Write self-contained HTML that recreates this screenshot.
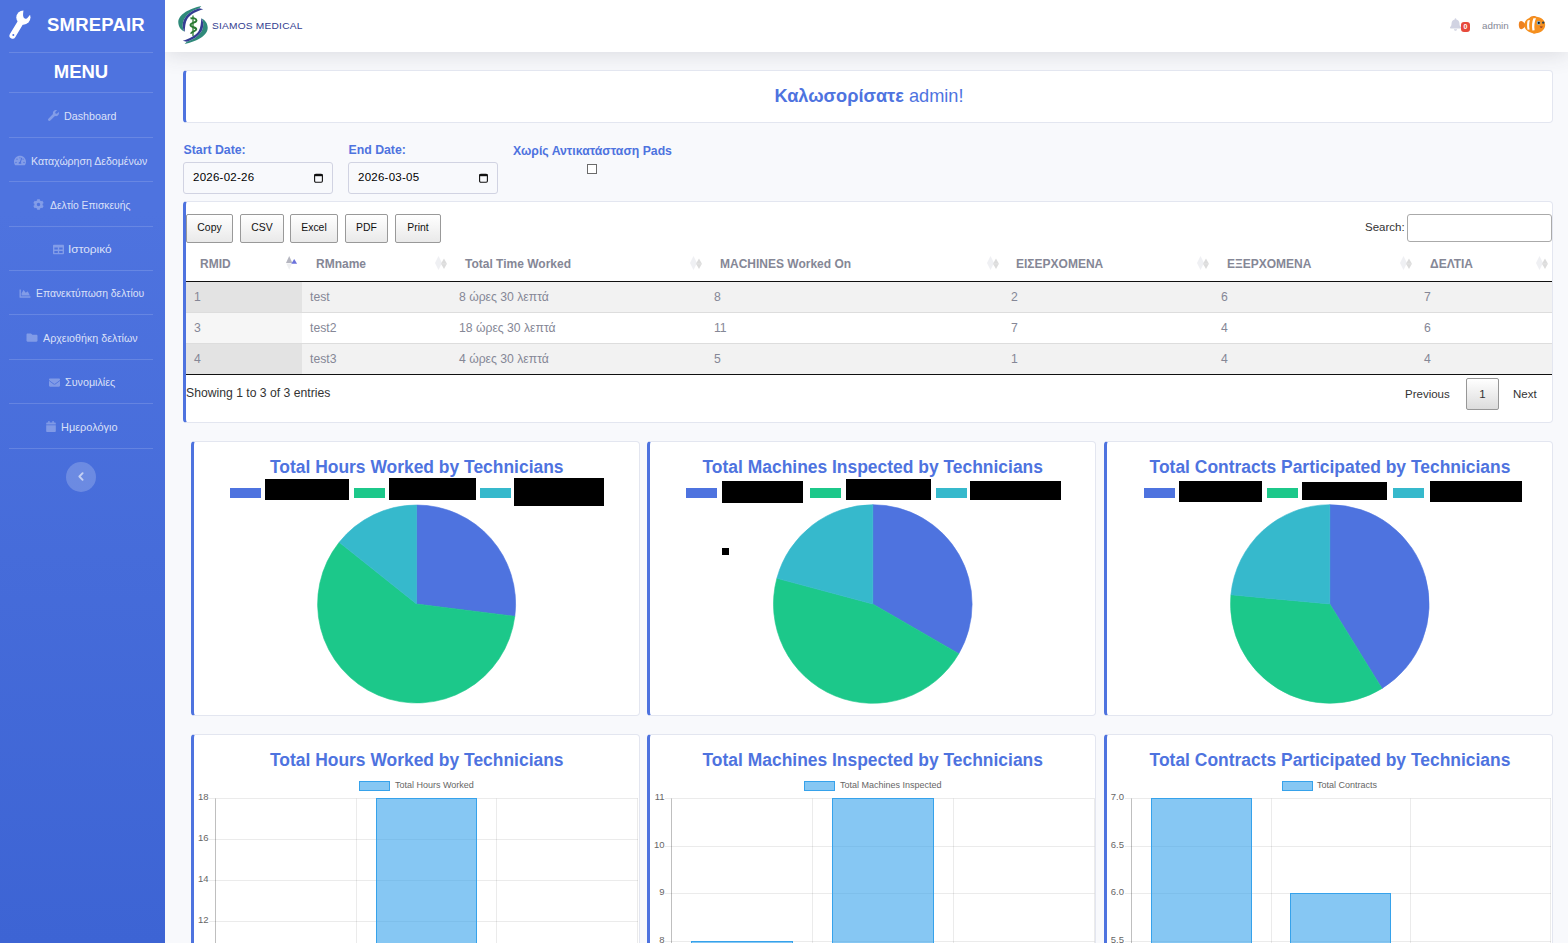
<!DOCTYPE html>
<html><head><meta charset="utf-8">
<style>
*{box-sizing:border-box;margin:0;padding:0}
html,body{width:1568px;height:943px;overflow:hidden;background:#f8f9fc;font-family:"Liberation Sans",sans-serif;color:#858796}
.abs{position:absolute}
#sb{position:absolute;z-index:5;left:0;top:0;width:165px;height:943px;background:linear-gradient(180deg,#4e73df 0px,#4e73df 211px,#3d64d4 943px)}
.hr{position:absolute;left:9px;width:144px;height:1px;background:rgba(255,255,255,.15)}
.nav{position:absolute;left:0;width:165px;text-align:center;color:rgba(255,255,255,.8);font-size:11px;white-space:nowrap}
.nav2{position:absolute;transform-origin:0 0;color:rgba(255,255,255,.8);font-size:11px;white-space:nowrap}
.ico{fill:rgba(255,255,255,.3)}
#top{position:absolute;left:165px;top:0;width:1403px;height:52px;background:#fff;box-shadow:0 2px 22px 0 rgba(58,59,69,.16)}
.card{position:absolute;background:#fff;border:1px solid #e3e6f0;border-left:3px solid #4e73df;border-radius:4px}
.lbl{position:absolute;color:#4e73df;font-weight:bold;font-size:12.3px;white-space:nowrap}
.inp{position:absolute;border:1px solid #d1d3e2;border-radius:3px;background:#f8f9fc;color:#000;font-size:11.5px;letter-spacing:0.25px}
.btn{position:absolute;top:214px;height:29px;border:1px solid #999;border-radius:2px;background:linear-gradient(180deg,#fff 0%,#e9e9e9 100%);color:#111;font-size:10.4px;text-align:center;line-height:26px}
.th{position:absolute;top:257px;font-weight:bold;font-size:12px;color:#858796;white-space:nowrap}
.td{position:absolute;font-size:12.2px;color:#858796;white-space:nowrap}
.ctitle{position:absolute;color:#4e73df;font-weight:bold;font-size:17.45px;white-space:nowrap;text-align:center}
.redact{position:absolute;background:#000}
.lg{position:absolute;top:488px;width:31px;height:10px}
</style></head>
<body>
<!-- SIDEBAR -->
<div id="sb">
  <svg class="abs" style="left:0;top:0" width="40" height="45" viewBox="0 0 40 45"><line x1="22" y1="20" x2="12.6" y2="35.6" stroke="#fff" stroke-width="6.2" stroke-linecap="round"/><circle cx="23.4" cy="17.6" r="7.1" fill="#fff"/><path d="M23.6 9.5 C23.2 12.5 22.6 15.5 23.6 17.6 C24.6 19.3 26.6 19 28 17.2 L32 12.5 L29.6 10 Z" fill="#4e73df"/><circle cx="13.3" cy="35.1" r="1" fill="#4e73df"/></svg>
  <div class="abs" style="left:47px;top:14px;font-size:18.5px;font-weight:bold;color:#fff;letter-spacing:0.2px">SMREPAIR</div>
  <div class="hr" style="top:52px"></div>
  <div class="abs" style="left:0;width:162px;text-align:center;top:61px;font-size:18.5px;font-weight:bold;color:#fff">MENU</div>
  <div class="hr" style="top:92px"></div>
  <svg class="abs ico" style="left:47.5px;top:110.0px" width="11" height="11" viewBox="0 0 512 512"><path d="M507.7 109.1c-2.2-9-13.5-12.1-20.1-5.5l-74.4 74.4-67.9-11.3-11.3-67.9 74.4-74.4c6.6-6.6 3.4-17.9-5.7-20.2-47.4-11.7-99.6.9-136.6 37.9-39.6 39.6-50.5 97.1-34.1 147.2L18.7 402.8c-25 25-25 65.5 0 90.5s65.5 25 90.5 0l213.2-213.2c50.1 16.7 107.5 5.7 147.4-34.1 37.1-37.1 49.7-89.3 37.9-136.9z"/></svg><div class="nav2" style="left:63.6px;top:109.5px;transform:scaleX(0.975)">Dashboard</div>
  <div class="hr" style="top:137px"></div>
  <svg class="abs ico" style="left:14.1px;top:155.3px" width="12" height="11" viewBox="0 0 576 512"><path d="M288 32C128.9 32 0 160.9 0 320c0 52.8 14.3 102.3 39.1 144.8 5.6 9.6 16.3 15.2 27.4 15.2h443c11.1 0 21.8-5.6 27.4-15.2C561.8 422.3 576 372.8 576 320c0-159.1-128.9-288-288-288zm0 64c14.7 0 26.6 10.1 30.3 23.7-1.1 2.3-2.6 4.2-3.5 6.7l-9.2 27.7c-5.1 3.5-11 6-17.6 6-17.7 0-32-14.3-32-32S270.3 96 288 96zM96 384c-17.7 0-32-14.3-32-32s14.3-32 32-32 32 14.3 32 32-14.3 32-32 32zm48-160c-17.7 0-32-14.3-32-32s14.3-32 32-32 32 14.3 32 32-14.3 32-32 32zm246.8-72.4l-61.3 184C343.1 347.3 352 364.5 352 384c0 11.7-3.4 22.6-8.9 32H232.9c-5.5-9.5-8.9-20.3-8.9-32 0-33.9 26.5-61.4 59.9-63.6l61.3-184c4.2-12.6 17.7-19.5 30.4-15.2 12.6 4.2 19.4 17.8 15.2 30.4zm14.7 57.2l15.5-46.6c3.5-1.3 7.1-2.2 11.1-2.2 17.7 0 32 14.3 32 32s-14.3 32-32 32c-11.4 0-20.9-6.2-26.6-15.2zM480 384c-17.7 0-32-14.3-32-32s14.3-32 32-32 32 14.3 32 32-14.3 32-32 32z"/></svg><div class="nav2" style="left:31.4px;top:154.8px;transform:scaleX(0.959)">Καταχώρηση Δεδομένων</div>
  <div class="hr" style="top:181px"></div>
  <svg class="abs ico" style="left:33.4px;top:199.1px" width="11" height="11" viewBox="0 0 512 512"><path d="M487.4 315.7l-42.6-24.6c4.3-23.2 4.3-47 0-70.2l42.6-24.6c4.9-2.8 7.1-8.6 5.5-14-11.1-35.6-30-67.8-54.7-94.6-3.8-4.1-10-5.1-14.8-2.3L380.8 110c-17.9-15.4-38.5-27.3-60.8-35.1V25.8c0-5.6-3.9-10.5-9.4-11.7-36.7-8.2-74.3-7.8-109.2 0-5.5 1.2-9.4 6.1-9.4 11.7V75c-22.2 7.9-42.8 19.8-60.8 35.1L88.7 85.5c-4.9-2.8-11-1.9-14.8 2.3-24.7 26.7-43.6 58.9-54.7 94.6-1.7 5.4.6 11.2 5.5 14L67.3 221c-4.3 23.2-4.3 47 0 70.2l-42.6 24.6c-4.9 2.8-7.1 8.6-5.5 14 11.1 35.6 30 67.8 54.7 94.6 3.8 4.1 10 5.1 14.8 2.3l42.6-24.6c17.9 15.4 38.5 27.3 60.8 35.1v49.2c0 5.6 3.9 10.5 9.4 11.7 36.7 8.2 74.3 7.8 109.2 0 5.5-1.2 9.4-6.1 9.4-11.7v-49.2c22.2-7.9 42.8-19.8 60.8-35.1l42.6 24.6c4.9 2.8 11 1.9 14.8-2.3 24.7-26.7 43.6-58.9 54.7-94.6 1.5-5.5-.7-11.3-5.6-14.1zM256 336c-44.1 0-80-35.9-80-80s35.9-80 80-80 80 35.9 80 80-35.9 80-80 80z"/></svg><div class="nav2" style="left:50.4px;top:198.6px;transform:scaleX(0.938)">Δελτίο Επισκευής</div>
  <div class="hr" style="top:226px"></div>
  <svg class="abs ico" style="left:52.8px;top:243.7px" width="11" height="11" viewBox="0 0 512 512"><path d="M464 32H48C21.5 32 0 53.5 0 80v352c0 26.5 21.5 48 48 48h416c26.5 0 48-21.5 48-48V80c0-26.5-21.5-48-48-48zM224 416H64v-96h160v96zm0-160H64v-96h160v96zm224 160H288v-96h160v96zm0-160H288v-96h160v96z"/></svg><div class="nav2" style="left:67.5px;top:243.2px;transform:scaleX(1.083)">Ιστορικό</div>
  <div class="hr" style="top:270px"></div>
  <svg class="abs ico" style="left:18.7px;top:287.6px" width="12" height="11" viewBox="0 0 512 512"><path d="M500 384c6.6 0 12 5.4 12 12v40c0 6.6-5.4 12-12 12H12c-6.6 0-12-5.4-12-12V76c0-6.6 5.4-12 12-12h40c6.6 0 12 5.4 12 12v308h436zM372.7 159.5L288 216l-85.3-113.7c-5.1-6.8-15.5-6.3-19.9 1L96 248v104h384l-89.9-187.8c-3.2-6.5-11.4-8.7-17.4-4.7z"/></svg><div class="nav2" style="left:36.2px;top:287.1px;transform:scaleX(0.942)">Επανεκτύπωση δελτίου</div>
  <div class="hr" style="top:314px"></div>
  <svg class="abs ico" style="left:25.8px;top:332.1px" width="12" height="11" viewBox="0 0 512 512"><path d="M464 128H272l-64-64H48C21.49 64 0 85.49 0 112v288c0 26.51 21.49 48 48 48h416c26.51 0 48-21.49 48-48V176c0-26.51-21.49-48-48-48z"/></svg><div class="nav2" style="left:43.2px;top:331.6px;transform:scaleX(0.974)">Αρχειοθήκη δελτίων</div>
  <div class="hr" style="top:359px"></div>
  <svg class="abs ico" style="left:49px;top:376.7px" width="11" height="11" viewBox="0 0 512 512"><path d="M502.3 190.8c3.9-3.1 9.7-.2 9.7 4.7V400c0 26.5-21.5 48-48 48H48c-26.5 0-48-21.5-48-48V195.6c0-5 5.7-7.8 9.7-4.7 22.4 17.4 52.1 39.5 154.1 113.6 21.1 15.4 56.7 47.8 92.2 47.6 35.7.3 72-32.8 92.3-47.6 102-74.1 131.6-96.3 154-113.7zM256 320c23.2.4 56.6-29.2 73.4-41.4 132.7-96.3 142.8-104.7 173.4-128.7 5.8-4.5 9.2-11.5 9.2-18.9v-19c0-26.5-21.5-48-48-48H48C21.5 64 0 85.5 0 112v19c0 7.4 3.4 14.3 9.2 18.9 30.6 23.9 40.7 32.4 173.4 128.7 16.8 12.2 50.2 41.8 73.4 41.4z"/></svg><div class="nav2" style="left:64.8px;top:376.2px;transform:scaleX(0.978)">Συνομιλίες</div>
  <div class="hr" style="top:403px"></div>
  <svg class="abs ico" style="left:46px;top:421.2px" width="10" height="11" viewBox="0 0 448 512"><path d="M12 192h424c6.6 0 12 5.4 12 12v260c0 26.5-21.5 48-48 48H48c-26.5 0-48-21.5-48-48V204c0-6.6 5.4-12 12-12zm436-44v-36c0-26.5-21.5-48-48-48h-48V12c0-6.6-5.4-12-12-12h-40c-6.6 0-12 5.4-12 12v52H160V12c0-6.6-5.4-12-12-12h-40c-6.6 0-12 5.4-12 12v52H48C21.5 64 0 85.5 0 112v36c0 6.6 5.4 12 12 12h424c6.6 0 12-5.4 12-12z"/></svg><div class="nav2" style="left:61.4px;top:420.7px;transform:scaleX(0.993)">Ημερολόγιο</div>
  <div class="hr" style="top:448px"></div>
  <div class="abs" style="left:66px;top:462px;width:30px;height:30px;border-radius:50%;background:rgba(255,255,255,.2)"></div>
  <svg class="abs" style="left:77px;top:472px" width="8" height="9" viewBox="0 0 8 9"><path d="M5.6 1.2 L2.4 4.5 L5.6 7.8" stroke="rgba(255,255,255,.6)" stroke-width="1.9" stroke-linecap="round" stroke-linejoin="round" fill="none"/></svg>
</div>

<!-- TOPBAR -->
<div id="top">
  <svg class="abs" style="left:10px;top:3px" width="36" height="44" viewBox="0 0 36 44">
    <g>
    <path d="M26.3 2.9 C15 5.5 3 11 3.3 19.5 C3.5 24 6 27 9.7 28.8 C7 25 7.2 19.5 9.6 15.4 C13 10.3 18.5 6.8 24.3 5.3 Z" fill="#2f8a7a"/>
    <path d="M24.3 5.3 C18.5 6.8 13 10.3 9.6 15.4 C7.2 19.5 7 25 9.7 28.8 C10 24.5 10.3 19.5 12.3 16 C15.3 11.3 21.5 8.3 28.2 6.3 Z" fill="#343d92"/>
    </g>
    <g transform="rotate(180 18 22)">
    <path d="M26.3 2.9 C15 5.5 3 11 3.3 19.5 C3.5 24 6 27 9.7 28.8 C7 25 7.2 19.5 9.6 15.4 C13 10.3 18.5 6.8 24.3 5.3 Z" fill="#2f8a7a"/>
    <path d="M24.3 5.3 C18.5 6.8 13 10.3 9.6 15.4 C7.2 19.5 7 25 9.7 28.8 C10 24.5 10.3 19.5 12.3 16 C15.3 11.3 21.5 8.3 28.2 6.3 Z" fill="#343d92"/>
    </g>
    <path d="M18 12.5 L18 33" stroke="#2a7a32" stroke-width="1.3"/>
    <path d="M15.5 15.5 C18 14.5 21.5 15.5 21.5 17.5 C21.5 19.8 15.5 19.5 15.5 22 C15.5 24.5 21.3 24 21.3 26.3 C21.3 28.5 16 28.3 16 30.8" stroke="#2a7a32" stroke-width="1.9" fill="none"/>
  </svg>
  <div class="abs" style="left:47px;top:19.5px;font-size:9.6px;color:#323c8f;letter-spacing:0.2px;white-space:nowrap;transform:scaleX(1.06);transform-origin:0 0">SIAMOS MEDICAL</div>
  <svg class="abs" style="left:1285px;top:17px" width="11" height="15" viewBox="0 0 448 512"><path d="M224 512c35.3 0 64-28.7 64-64H160c0 35.3 28.7 64 64 64zm215.4-149.7c-19.3-20.8-55.5-52-55.5-154.3 0-77.7-54.5-139.9-127.9-155.2V32c0-17.7-14.3-32-32-32s-32 14.3-32 32v20.8C118.6 68.1 64.1 130.3 64.1 208c0 102.3-36.2 133.5-55.5 154.3-6 6.5-8.7 14.2-8.6 21.7.1 16.4 13 32 32.1 32h383.8c19.1 0 32-15.6 32.1-32 .1-7.5-2.6-15.3-8.6-21.7z" fill="#d1d3e2"/></svg>
  <div class="abs" style="left:1296px;top:22px;width:9px;height:10px;border-radius:3px;background:#e74a3b;color:#fff;font-size:7px;font-weight:bold;text-align:center;line-height:10px">0</div>
  <div class="abs" style="left:1317px;top:19.5px;font-size:9.8px;color:#858796">admin</div>
  <svg class="abs" style="left:1347px;top:10px" width="40" height="30" viewBox="0 0 40 30">
    <path d="M13.5 14.8 C11 10.5 7.5 9.8 6.9 13.5 C6.5 16.5 7.5 19.5 9.5 19.2 C11 19 12.5 17.5 13.5 15.5 Z" fill="#ee8220"/>
    
    <path d="M17 8.5 C19 5.5 23 5.3 25 7.5 L22 9 Z" fill="#ef8420"/>
    <path d="M19 21.5 C20 24 23 24.3 25 22.5 L22.5 20.5 Z" fill="#ef8420"/>
    <path d="M12.6 13.2 C13.5 9 18.5 6.6 24 6.8 C29.5 7 33.2 10.5 33.2 15 C33 19.5 29 23 24 23.2 C18.5 23.4 13.5 21 12.6 16.8 Z" fill="#f5901f"/>
    <path d="M15.6 10.4 C14.9 13.5 14.9 16.8 15.6 19.8 L17.6 19.6 C17 16.5 17 13.5 17.9 10 Z" fill="#fff"/>
    <path d="M21.4 8.2 C20 11.5 19.6 16 20.4 20.4 L22.6 20.2 C22 16 22.4 11.5 24 8.2 Z" fill="#fff"/>
    <circle cx="26.6" cy="12.9" r="1.9" fill="#7ab8e0"/><circle cx="26.8" cy="12.9" r="1.1" fill="#101820"/>
    <circle cx="31.2" cy="12.6" r="1.2" fill="#2a4050"/>
    <path d="M27.6 16.4 C28.5 18.2 30 18.3 30.8 16.6 Z" fill="#8a2a2a"/>
  </svg>
</div>


<!-- WELCOME -->
<div class="card" style="left:183px;top:70px;width:1370px;height:53px"></div>
<div class="abs" style="left:184px;top:86px;width:1370px;text-align:center;font-size:18.2px;color:#4e73df;white-space:nowrap"><b>Καλωσορίσατε</b> admin!</div>

<!-- FILTERS -->
<div class="lbl" style="left:183.5px;top:143.4px">Start Date:</div>
<div class="inp" style="left:183px;top:162px;width:150px;height:32px"><span class="abs" style="left:9px;top:8px">2026-02-26</span><svg class="abs" style="left:129.5px;top:10px" width="9" height="10" viewBox="0 0 9 10"><rect x="0.6" y="1.3" width="7.8" height="7.9" rx="1.2" fill="none" stroke="#111" stroke-width="1.1"/><rect x="0.6" y="1" width="7.8" height="2.2" fill="#111"/></svg></div>
<div class="lbl" style="left:348.5px;top:143.4px">End Date:</div>
<div class="inp" style="left:348px;top:162px;width:150px;height:32px"><span class="abs" style="left:9px;top:8px">2026-03-05</span><svg class="abs" style="left:129.5px;top:10px" width="9" height="10" viewBox="0 0 9 10"><rect x="0.6" y="1.3" width="7.8" height="7.9" rx="1.2" fill="none" stroke="#111" stroke-width="1.1"/><rect x="0.6" y="1" width="7.8" height="2.2" fill="#111"/></svg></div>
<div class="lbl" style="left:513px;top:144px;font-size:12.25px">Χωρίς Αντικατάσταση Pads</div>
<div class="abs" style="left:587px;top:164px;width:10px;height:10px;border:1px solid #6b6b6b;border-radius:0;background:#fff"></div>

<!-- TABLE CARD -->
<div class="card" style="left:183px;top:201px;width:1370px;height:222px"></div>
<div class="btn" style="left:186px;width:47px">Copy</div>
<div class="btn" style="left:240px;width:44px">CSV</div>
<div class="btn" style="left:290px;width:48px">Excel</div>
<div class="btn" style="left:345px;width:43px">PDF</div>
<div class="btn" style="left:395px;width:46px">Print</div>
<div class="abs" style="left:1365px;top:221px;font-size:11.5px;color:#333">Search:</div>
<div class="abs" style="left:1407px;top:214px;width:145px;height:28px;border:1px solid #aaa;border-radius:3px;background:#fff"></div>

<div class="th" style="left:200px">RMID</div>
<div class="th" style="left:316px">RMname</div>
<div class="th" style="left:465px">Total Time Worked</div>
<div class="th" style="left:720px">MACHINES Worked On</div>
<div class="th" style="left:1016px">ΕΙΣΕΡΧΟΜΕΝΑ</div>
<div class="th" style="left:1227px">ΕΞΕΡΧΟΜΕΝΑ</div>
<div class="th" style="left:1430px">ΔΕΛΤΙΑ</div>
<div class="abs" style="left:186px;top:281px;width:1366px;height:1px;background:#111"></div>
<div class="abs" style="left:186px;top:282px;width:1366px;height:30px;background:#f2f2f2"></div>
<div class="abs" style="left:186px;top:282px;width:116px;height:30px;background:#e3e3e3"></div>
<div class="abs" style="left:186px;top:312px;width:1366px;height:1px;background:#ddd"></div>
<div class="abs" style="left:186px;top:313px;width:116px;height:30px;background:#f6f6f6"></div>
<div class="abs" style="left:186px;top:343px;width:1366px;height:1px;background:#ddd"></div>
<div class="abs" style="left:186px;top:344px;width:1366px;height:30px;background:#f2f2f2"></div>
<div class="abs" style="left:186px;top:344px;width:116px;height:30px;background:#e3e3e3"></div>
<div class="abs" style="left:186px;top:374px;width:1366px;height:1px;background:#111"></div>
<div class="td" style="left:194px;top:290px">1</div>
<div class="td" style="left:310px;top:290px">test</div>
<div class="td" style="left:459px;top:290px">8 ώρες 30 λεπτά</div>
<div class="td" style="left:714px;top:290px">8</div>
<div class="td" style="left:1011px;top:290px">2</div>
<div class="td" style="left:1221px;top:290px">6</div>
<div class="td" style="left:1424px;top:290px">7</div>
<div class="td" style="left:194px;top:321px">3</div>
<div class="td" style="left:310px;top:321px">test2</div>
<div class="td" style="left:459px;top:321px">18 ώρες 30 λεπτά</div>
<div class="td" style="left:714px;top:321px">11</div>
<div class="td" style="left:1011px;top:321px">7</div>
<div class="td" style="left:1221px;top:321px">4</div>
<div class="td" style="left:1424px;top:321px">6</div>
<div class="td" style="left:194px;top:352px">4</div>
<div class="td" style="left:310px;top:352px">test3</div>
<div class="td" style="left:459px;top:352px">4 ώρες 30 λεπτά</div>
<div class="td" style="left:714px;top:352px">5</div>
<div class="td" style="left:1011px;top:352px">1</div>
<div class="td" style="left:1221px;top:352px">4</div>
<div class="td" style="left:1424px;top:352px">4</div>

<div class="abs" style="left:186px;top:386px;font-size:12.2px;color:#333;white-space:nowrap">Showing 1 to 3 of 3 entries</div>
<div class="abs" style="left:1405px;top:388px;font-size:11.5px;color:#333">Previous</div>
<div class="abs" style="left:1466px;top:378px;width:33px;height:32px;border:1px solid #979797;border-radius:2px;background:linear-gradient(180deg,#fff 0%,#dcdcdc 100%);color:#333;font-size:11.5px;text-align:center;line-height:30px">1</div>
<div class="abs" style="left:1513px;top:388px;font-size:11.5px;color:#333">Next</div>
<svg class="abs" style="left:286.2px;top:256px" width="12" height="14" viewBox="0 0 12 14"><path d="M0 7 L3.2 0 L6.4 7 Z" fill="#b5b6c0"/><path d="M0.3 7.4 L3.2 13.8 L6.1 7.4 Z" fill="#eff0f2"/><path d="M5.3 7.8 L8.2 2.9 L11.1 7.8 Z" fill="#6b72dc"/></svg>
<svg class="abs" style="left:435.2px;top:256px" width="12" height="14" viewBox="0 0 12 14"><path d="M0 7 L3.5 0 L7 7 L3.5 14 Z" fill="#eff0f3"/><path d="M6 7.8 L9 2.6 L11.9 7.8 L9 13 Z" fill="#dcdcdc"/><rect x="6" y="7.6" width="6" height="0.6" fill="#e8e8e8"/></svg>
<svg class="abs" style="left:690.2px;top:256px" width="12" height="14" viewBox="0 0 12 14"><path d="M0 7 L3.5 0 L7 7 L3.5 14 Z" fill="#eff0f3"/><path d="M6 7.8 L9 2.6 L11.9 7.8 L9 13 Z" fill="#dcdcdc"/><rect x="6" y="7.6" width="6" height="0.6" fill="#e8e8e8"/></svg>
<svg class="abs" style="left:987.2px;top:256px" width="12" height="14" viewBox="0 0 12 14"><path d="M0 7 L3.5 0 L7 7 L3.5 14 Z" fill="#eff0f3"/><path d="M6 7.8 L9 2.6 L11.9 7.8 L9 13 Z" fill="#dcdcdc"/><rect x="6" y="7.6" width="6" height="0.6" fill="#e8e8e8"/></svg>
<svg class="abs" style="left:1197.2px;top:256px" width="12" height="14" viewBox="0 0 12 14"><path d="M0 7 L3.5 0 L7 7 L3.5 14 Z" fill="#eff0f3"/><path d="M6 7.8 L9 2.6 L11.9 7.8 L9 13 Z" fill="#dcdcdc"/><rect x="6" y="7.6" width="6" height="0.6" fill="#e8e8e8"/></svg>
<svg class="abs" style="left:1400.2px;top:256px" width="12" height="14" viewBox="0 0 12 14"><path d="M0 7 L3.5 0 L7 7 L3.5 14 Z" fill="#eff0f3"/><path d="M6 7.8 L9 2.6 L11.9 7.8 L9 13 Z" fill="#dcdcdc"/><rect x="6" y="7.6" width="6" height="0.6" fill="#e8e8e8"/></svg>
<svg class="abs" style="left:1536.2px;top:256px" width="12" height="14" viewBox="0 0 12 14"><path d="M0 7 L3.5 0 L7 7 L3.5 14 Z" fill="#eff0f3"/><path d="M6 7.8 L9 2.6 L11.9 7.8 L9 13 Z" fill="#dcdcdc"/><rect x="6" y="7.6" width="6" height="0.6" fill="#e8e8e8"/></svg>
<!-- CHARTS -->
<div class="card" style="left:191px;top:441px;width:448.5px;height:275px"></div>
<div class="ctitle" style="left:194px;top:457px;width:445.5px">Total Hours Worked by Technicians</div>
<div class="card" style="left:647px;top:441px;width:448.5px;height:275px"></div>
<div class="ctitle" style="left:650px;top:457px;width:445.5px">Total Machines Inspected by Technicians</div>
<div class="card" style="left:1104px;top:441px;width:449px;height:275px"></div>
<div class="ctitle" style="left:1107px;top:457px;width:446px">Total Contracts Participated by Technicians</div>
<div class="card" style="left:191px;top:734px;width:448.5px;height:260px"></div>
<div class="ctitle" style="left:194px;top:750px;width:445.5px">Total Hours Worked by Technicians</div>
<div class="card" style="left:647px;top:734px;width:448.5px;height:260px"></div>
<div class="ctitle" style="left:650px;top:750px;width:445.5px">Total Machines Inspected by Technicians</div>
<div class="card" style="left:1104px;top:734px;width:449px;height:260px"></div>
<div class="ctitle" style="left:1107px;top:750px;width:446px">Total Contracts Participated by Technicians</div>
<svg class="abs" style="left:0;top:0;z-index:2" width="1568" height="943" viewBox="0 0 1568 943">
<path d="M416.60 604.00 L416.60 505.00 A99 99 0 0 1 514.83 616.31 Z" fill="#4e73df" stroke="#4e73df" stroke-width="0.6" stroke-linejoin="round"/><path d="M416.60 604.00 L514.83 616.31 A99 99 0 1 1 339.20 542.27 Z" fill="#1cc88a" stroke="#1cc88a" stroke-width="0.6" stroke-linejoin="round"/><path d="M416.60 604.00 L339.20 542.27 A99 99 0 0 1 416.60 505.00 Z" fill="#36b9cc" stroke="#36b9cc" stroke-width="0.6" stroke-linejoin="round"/>
<path d="M872.80 604.00 L872.80 504.70 A99.3 99.3 0 0 1 958.80 653.65 Z" fill="#4e73df" stroke="#4e73df" stroke-width="0.6" stroke-linejoin="round"/><path d="M872.80 604.00 L958.80 653.65 A99.3 99.3 0 0 1 776.88 578.30 Z" fill="#1cc88a" stroke="#1cc88a" stroke-width="0.6" stroke-linejoin="round"/><path d="M872.80 604.00 L776.88 578.30 A99.3 99.3 0 0 1 872.80 504.70 Z" fill="#36b9cc" stroke="#36b9cc" stroke-width="0.6" stroke-linejoin="round"/>
<path d="M1329.80 604.00 L1329.80 504.70 A99.3 99.3 0 0 1 1382.07 688.43 Z" fill="#4e73df" stroke="#4e73df" stroke-width="0.6" stroke-linejoin="round"/><path d="M1329.80 604.00 L1382.07 688.43 A99.3 99.3 0 0 1 1230.92 594.84 Z" fill="#1cc88a" stroke="#1cc88a" stroke-width="0.6" stroke-linejoin="round"/><path d="M1329.80 604.00 L1230.92 594.84 A99.3 99.3 0 0 1 1329.80 504.70 Z" fill="#36b9cc" stroke="#36b9cc" stroke-width="0.6" stroke-linejoin="round"/>
</svg>
<div class="lg" style="left:230.0px;background:#4e73df"></div>
<div class="lg" style="left:353.8px;background:#1cc88a"></div>
<div class="lg" style="left:480.0px;background:#36b9cc"></div>
<div class="redact" style="left:265.2px;top:479.2px;width:83.4px;height:20.9px"></div>
<div class="redact" style="left:388.5px;top:478.3px;width:87.7px;height:21.8px"></div>
<div class="redact" style="left:513.7px;top:477.7px;width:90.2px;height:28.0px"></div>
<div class="lg" style="left:686.1px;background:#4e73df"></div>
<div class="lg" style="left:809.8px;background:#1cc88a"></div>
<div class="lg" style="left:936.2px;background:#36b9cc"></div>
<div class="redact" style="left:722.1px;top:480.8px;width:80.9px;height:22.4px"></div>
<div class="redact" style="left:845.5px;top:479.2px;width:85.2px;height:20.9px"></div>
<div class="redact" style="left:969.7px;top:480.8px;width:91.7px;height:19.3px"></div>
<div class="redact" style="left:722.1px;top:548.4px;width:7.1px;height:6.2px"></div>
<div class="lg" style="left:1143.5px;background:#4e73df"></div>
<div class="lg" style="left:1267.2px;background:#1cc88a"></div>
<div class="lg" style="left:1392.7px;background:#36b9cc"></div>
<div class="redact" style="left:1178.6px;top:480.8px;width:83.0px;height:20.9px"></div>
<div class="redact" style="left:1302.0px;top:482.3px;width:84.5px;height:17.8px"></div>
<div class="redact" style="left:1429.6px;top:480.8px;width:92.0px;height:20.9px"></div>
<svg class="abs" style="left:0;top:0;z-index:2" width="1568" height="943" viewBox="0 0 1568 943">
<line x1="209.0" y1="798.5" x2="638" y2="798.5" stroke="rgba(0,0,0,0.08)" stroke-width="1"/><line x1="209.0" y1="839.5" x2="638" y2="839.5" stroke="rgba(0,0,0,0.08)" stroke-width="1"/><line x1="209.0" y1="880.5" x2="638" y2="880.5" stroke="rgba(0,0,0,0.08)" stroke-width="1"/><line x1="209.0" y1="921.5" x2="638" y2="921.5" stroke="rgba(0,0,0,0.08)" stroke-width="1"/><line x1="356.5" y1="798.5" x2="356.5" y2="943" stroke="rgba(0,0,0,0.08)" stroke-width="1"/><line x1="496.5" y1="798.5" x2="496.5" y2="943" stroke="rgba(0,0,0,0.08)" stroke-width="1"/><line x1="637.5" y1="798.5" x2="637.5" y2="943" stroke="rgba(0,0,0,0.08)" stroke-width="1"/><line x1="215.5" y1="798.5" x2="215.5" y2="943" stroke="rgba(0,0,0,0.25)" stroke-width="1"/><rect x="376.5" y="798.5" width="100.0" height="149.5" fill="rgba(54,162,235,0.6)" stroke="#36a2eb" stroke-width="1"/><text x="208.5" y="799.5" text-anchor="end" font-family="Liberation Sans" font-size="9.5" fill="#666">18</text><text x="208.5" y="840.5" text-anchor="end" font-family="Liberation Sans" font-size="9.5" fill="#666">16</text><text x="208.5" y="881.5" text-anchor="end" font-family="Liberation Sans" font-size="9.5" fill="#666">14</text><text x="208.5" y="922.5" text-anchor="end" font-family="Liberation Sans" font-size="9.5" fill="#666">12</text><rect x="359.5" y="781.5" width="30" height="9" fill="rgba(54,162,235,0.6)" stroke="#36a2eb" stroke-width="1"/><text x="395" y="788.4" font-family="Liberation Sans" font-size="9" fill="#666">Total Hours Worked</text>
<line x1="665.0" y1="798.5" x2="1094.5" y2="798.5" stroke="rgba(0,0,0,0.08)" stroke-width="1"/><line x1="665.0" y1="846.5" x2="1094.5" y2="846.5" stroke="rgba(0,0,0,0.08)" stroke-width="1"/><line x1="665.0" y1="893.5" x2="1094.5" y2="893.5" stroke="rgba(0,0,0,0.08)" stroke-width="1"/><line x1="665.0" y1="941.5" x2="1094.5" y2="941.5" stroke="rgba(0,0,0,0.08)" stroke-width="1"/><line x1="812.5" y1="798.5" x2="812.5" y2="943" stroke="rgba(0,0,0,0.08)" stroke-width="1"/><line x1="953.5" y1="798.5" x2="953.5" y2="943" stroke="rgba(0,0,0,0.08)" stroke-width="1"/><line x1="1094.5" y1="798.5" x2="1094.5" y2="943" stroke="rgba(0,0,0,0.08)" stroke-width="1"/><line x1="671.5" y1="798.5" x2="671.5" y2="943" stroke="rgba(0,0,0,0.25)" stroke-width="1"/><rect x="691.5" y="941.5" width="101.0" height="6.5" fill="rgba(54,162,235,0.6)" stroke="#36a2eb" stroke-width="1"/><rect x="832.5" y="798.5" width="101.0" height="149.5" fill="rgba(54,162,235,0.6)" stroke="#36a2eb" stroke-width="1"/><text x="664.5" y="799.5" text-anchor="end" font-family="Liberation Sans" font-size="9.5" fill="#666">11</text><text x="664.5" y="847.5" text-anchor="end" font-family="Liberation Sans" font-size="9.5" fill="#666">10</text><text x="664.5" y="894.5" text-anchor="end" font-family="Liberation Sans" font-size="9.5" fill="#666">9</text><text x="664.5" y="942.5" text-anchor="end" font-family="Liberation Sans" font-size="9.5" fill="#666">8</text><rect x="804.5" y="781.5" width="30" height="9" fill="rgba(54,162,235,0.6)" stroke="#36a2eb" stroke-width="1"/><text x="840" y="788.4" font-family="Liberation Sans" font-size="9" fill="#666">Total Machines Inspected</text>
<line x1="1125.0" y1="798.5" x2="1551" y2="798.5" stroke="rgba(0,0,0,0.08)" stroke-width="1"/><line x1="1125.0" y1="846.5" x2="1551" y2="846.5" stroke="rgba(0,0,0,0.08)" stroke-width="1"/><line x1="1125.0" y1="893.5" x2="1551" y2="893.5" stroke="rgba(0,0,0,0.08)" stroke-width="1"/><line x1="1125.0" y1="941.5" x2="1551" y2="941.5" stroke="rgba(0,0,0,0.08)" stroke-width="1"/><line x1="1271.5" y1="798.5" x2="1271.5" y2="943" stroke="rgba(0,0,0,0.08)" stroke-width="1"/><line x1="1410.5" y1="798.5" x2="1410.5" y2="943" stroke="rgba(0,0,0,0.08)" stroke-width="1"/><line x1="1550.5" y1="798.5" x2="1550.5" y2="943" stroke="rgba(0,0,0,0.08)" stroke-width="1"/><line x1="1131.5" y1="798.5" x2="1131.5" y2="943" stroke="rgba(0,0,0,0.25)" stroke-width="1"/><rect x="1151.5" y="798.5" width="100.0" height="149.5" fill="rgba(54,162,235,0.6)" stroke="#36a2eb" stroke-width="1"/><rect x="1290.5" y="893.5" width="100.0" height="54.5" fill="rgba(54,162,235,0.6)" stroke="#36a2eb" stroke-width="1"/><text x="1124" y="799.5" text-anchor="end" font-family="Liberation Sans" font-size="9.5" fill="#666">7.0</text><text x="1124" y="847.5" text-anchor="end" font-family="Liberation Sans" font-size="9.5" fill="#666">6.5</text><text x="1124" y="894.5" text-anchor="end" font-family="Liberation Sans" font-size="9.5" fill="#666">6.0</text><text x="1124" y="942.5" text-anchor="end" font-family="Liberation Sans" font-size="9.5" fill="#666">5.5</text><rect x="1282.5" y="781.5" width="30" height="9" fill="rgba(54,162,235,0.6)" stroke="#36a2eb" stroke-width="1"/><text x="1317" y="788.4" font-family="Liberation Sans" font-size="9" fill="#666">Total Contracts</text>
</svg>
<!-- /CHARTS -->
</body></html>
